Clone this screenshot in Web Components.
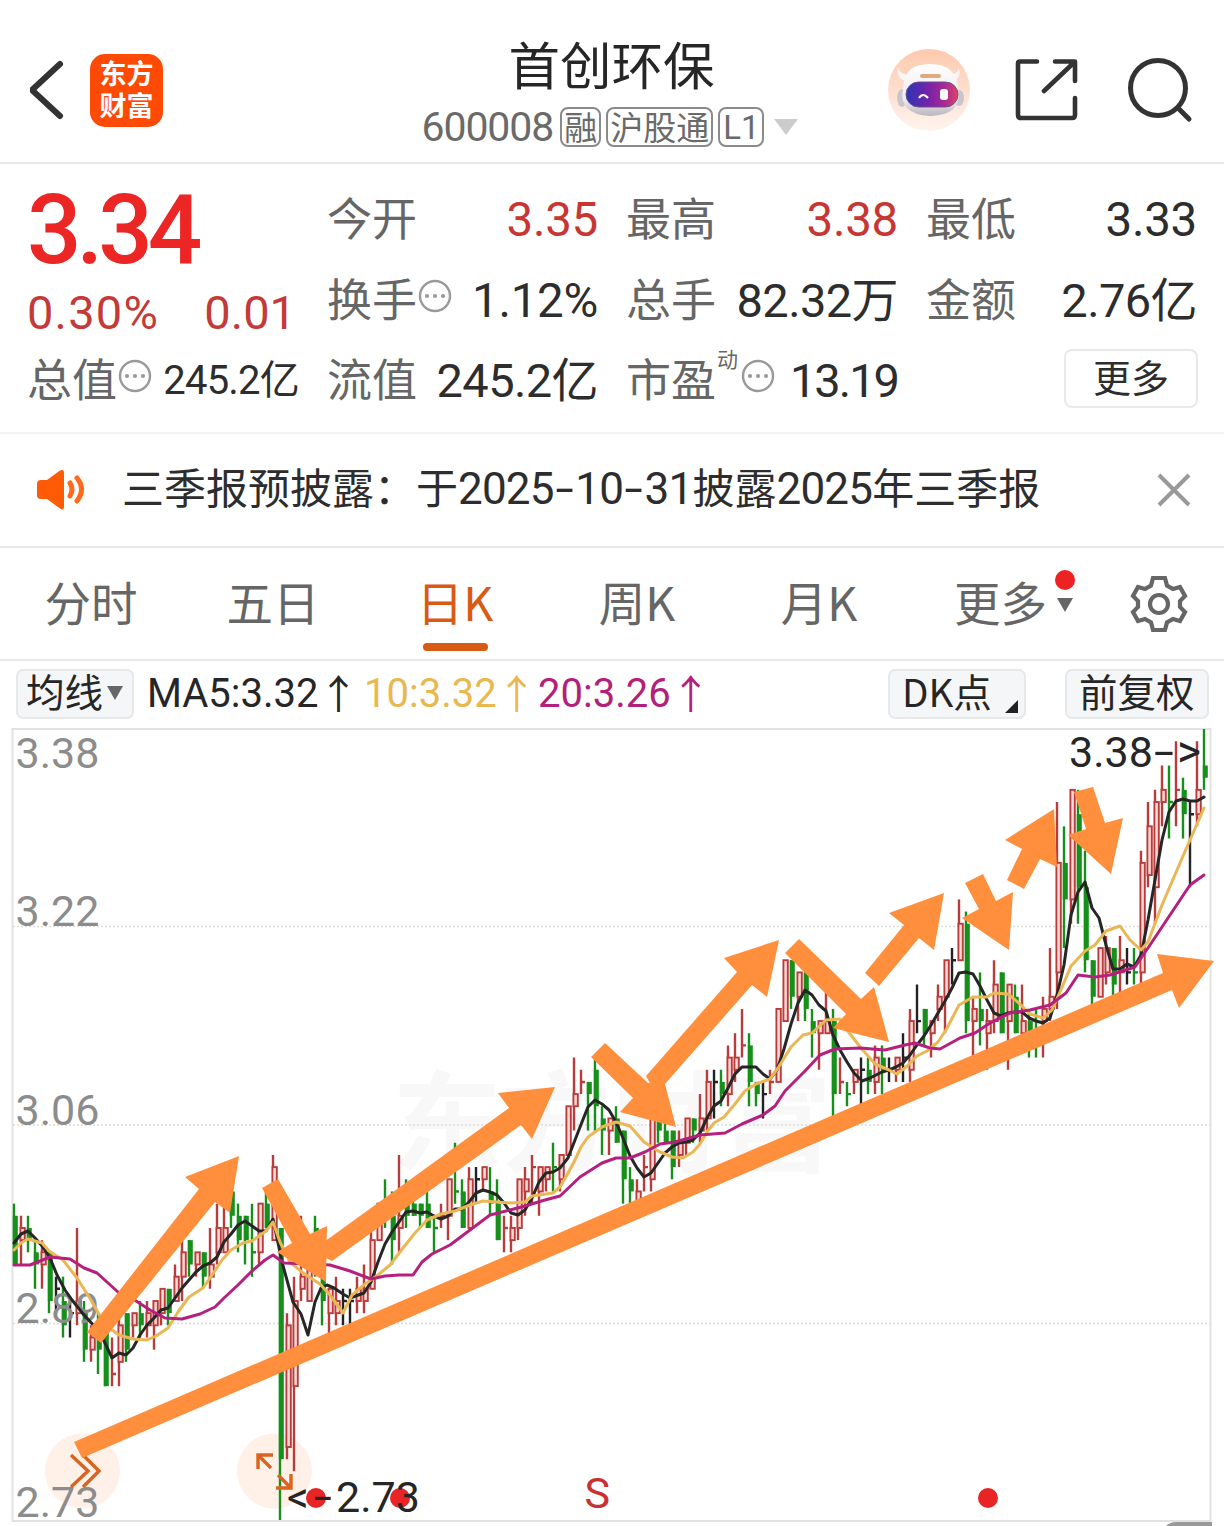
<!DOCTYPE html>
<html lang="zh-CN">
<head>
<meta charset="utf-8">
<title>首创环保 600008</title>
<style>
  body {
    margin: 0;
    width: 1224px;
    height: 1526px;
    overflow: hidden;
    background: #fff;
    color: #2d2d2d;
    font-family: "Noto Sans CJK SC", "Noto Sans", sans-serif;
    --num: Roboto, "Noto Sans CJK SC", sans-serif;
  }
</style>
</head>
<body>
<stock-page></stock-page>

<script>
class StockHeader extends HTMLElement {
  connectedCallback() {
    this.attachShadow({ mode: 'open' });
    this.shadowRoot.innerHTML = `
      <style>
        :host {
          display: grid;
          grid-template-columns: 395px 1fr 396px;
          height: 162px;
          border-bottom: 2px solid #e9e9e9;
        }
        .left, .right {
          display: flex;
          align-items: center;
          padding-top: 18px;
          height: 144px;
        }
        .left { padding-left: 25px; }
        .left svg { margin-right: 25px; }
        .right { justify-content: flex-end; padding-right: 30px; }
        .logo {
          display: grid;
          place-content: center;
          width: 73px;
          height: 73px;
          border-radius: 15px;
          background: #ff4a05;
          color: #fff;
          font-size: 27px;
          font-weight: 700;
          line-height: 32px;
          text-align: center;
          padding-bottom: 3px;
          box-sizing: border-box;
        }
        .middle {
          display: flex;
          flex-direction: column;
          align-items: center;
          padding-top: 32px;
        }
        .name { font-size: 51.5px; line-height: 62px; color: #262626; }
        .sub {
          display: flex;
          align-items: center;
          height: 66px;
          margin-left: -3px;
          color: #6a6a6a;
        }
        .code { font-family: var(--num); font-size: 41px; letter-spacing: -1.1px; margin-right: 7px; line-height: 60px; }
        .tag {
          border: 2px solid #8a8a8a;
          border-radius: 8px;
          font-size: 33px;
          line-height: 34px;
          height: 36px;
          padding: 0 2px;
          margin-right: 5px;
        }
        .tag.lv { font-family: var(--num); line-height: 37px; padding: 0 3px; }
        .arrow { margin-left: 5px; }
      </style>
      <div class="left">
        <svg width="40" height="62" viewBox="0 0 40 62" fill="none" stroke="#333" stroke-width="6" stroke-linecap="round" stroke-linejoin="bevel"><path d="M35 5 7 31 35 57"/></svg>
        <div class="logo">东方<br>财富</div>
      </div>
      <div class="middle">
        <div class="name">首创环保</div>
        <div class="sub">
          <span class="code">600008</span>
          <span class="tag">融</span><span class="tag">沪股通</span><span class="tag lv">L1</span>
          <svg class="arrow" width="24" height="17"><path d="M0 0H24L12 16Z" fill="#ccc"/></svg>
        </div>
      </div>
      <div class="right">
        <svg width="82" height="82" viewBox="0 0 82 82" style="margin-right:44px">
          <defs>
            <linearGradient id="bg" x2="0" y2="1"><stop offset="0" stop-color="#fdc9ad"/><stop offset="1" stop-color="#fff4ef"/></linearGradient>
            <linearGradient id="visor"><stop offset="0" stop-color="#2a35b5"/><stop offset=".45" stop-color="#7a22a8"/><stop offset=".75" stop-color="#a82a94"/><stop offset="1" stop-color="#e04460"/></linearGradient>
            <linearGradient id="shell" x2="0" y2="1"><stop offset="0" stop-color="#fff"/><stop offset=".7" stop-color="#eee9ee"/><stop offset="1" stop-color="#b9b4bd"/></linearGradient>
          </defs>
          <circle cx="41" cy="41" r="41" fill="url(#bg)"/>
          <path d="M10 19Q8 31 20 32L24 26Q13 27 10 19ZM71 19Q74 31 62 32L58 26Q69 27 71 19Z" fill="#faf5f5"/>
          <ellipse cx="14" cy="49" rx="5" ry="9" fill="#c9c5cb"/>
          <ellipse cx="71" cy="49" rx="5" ry="8" fill="#c9c5cb"/>
          <path d="M15 40Q15 15 42 15Q69 15 70 40Q75 66 42 67Q10 65 15 40Z" fill="url(#shell)"/>
          <rect x="32" y="25" width="21" height="4" rx="2" fill="#dfaa80"/>
          <rect x="18" y="33" width="52" height="25" rx="12.5" fill="url(#visor)" stroke="#6c5385"/>
          <path d="M31 49Q35 43 40 49" fill="none" stroke="#fff" stroke-width="2.2"/>
          <rect x="52" y="40" width="8" height="11" rx="3" fill="#fff"/>
        </svg>
        <svg width="66" height="66" viewBox="0 0 66 66" fill="none" stroke="#333" stroke-width="4.600" stroke-linecap="round" stroke-linejoin="round" style="margin-right:46px">
          <path d="M23 4.500H6Q4 4.500 4 6.500V58Q4 61 7 61H58Q61 61 61 58V41M41 4.500H61V24M60 5.500 30 34"/>
        </svg>
        <svg width="68" height="68" viewBox="0 0 68 68" fill="none" stroke="#333" stroke-width="5" stroke-linecap="round">
          <circle cx="32" cy="32" r="27.5"/><path d="M52 52 63 63"/>
        </svg>
      </div>
    `;
  }
}

/* label on the left, value on the right; "info" adds the dotted circle */
class QuoteItem extends HTMLElement {
  connectedCallback() {
    const info = this.hasAttribute('info')
      ? `<svg width="34" height="34" viewBox="0 0 34 34"><circle cx="17" cy="17" r="15" fill="none" stroke="#999" stroke-width="2.4"/><g fill="#999"><circle cx="9" cy="17" r="2.1"/><circle cx="17" cy="17" r="2.1"/><circle cx="25" cy="17" r="2.1"/></g></svg>`
      : '';
    const sup = this.getAttribute('sup');
    this.attachShadow({ mode: 'open' });
    this.shadowRoot.innerHTML = `
      <style>
        :host {
          display: flex;
          align-items: center;
          justify-content: space-between;
          white-space: nowrap;
        }
        .label {
          display: flex;
          align-items: center;
          font-size: 45px;
          line-height: 60px;
          color: #666;
          margin-top: -5px;
        }
        .label svg { margin: -4px 0 0 1px; }
        sup { align-self: flex-start; font-size: 21px; line-height: 22px; color: #666; margin: -1px 2px 0 1px; }
        .value {
          font-family: var(--num);
          font-size: var(--value-size, 47.5px);
          letter-spacing: var(--value-spacing, -0.3px);
          line-height: 60px;
          margin-top: 1px;
          color: var(--value-color, #2d2d2d);
        }
      </style>
      <div class="label"><slot name="label"></slot>${sup ? `<sup>${sup}</sup>` : ''}${info}</div>
      <div class="value"><slot></slot></div>
    `;
  }
}

class QuotePanel extends HTMLElement {
  connectedCallback() {
    this.attachShadow({ mode: 'open' });
    this.shadowRoot.innerHTML = `
      <style>
        :host {
          display: grid;
          grid-template-columns: 272px 271px 272px 271px;
          grid-template-rows: 82px 80px 80px;
          column-gap: 28px;
          box-sizing: border-box;
          height: 270px;
          padding: 14px 0 0 27px;
          border-bottom: 2px solid #f3f3f3;
        }
        .main { grid-row: 1 / 3; color: #ec2525; font-family: var(--num); }
        .price { font-size: 96px; font-weight: 500; line-height: 92px; letter-spacing: -5px; padding-top: 6px; }
        .change {
          display: flex;
          justify-content: space-between;
          font-size: 47px;
          line-height: 60px;
          letter-spacing: 1.2px;
          padding: 7px 3px 0 0;
          color: #c33a38;
        }
        .change span:last-child { letter-spacing: 0; }
        .up { --value-color: #c83634; }
        .unit { --value-size: 47px; --value-spacing: -0.6px; }
        .tight { --value-size: 47px; --value-spacing: -2px; }
        .small { --value-size: 40px; --value-spacing: -0.8px; }
        .more {
          justify-self: end;
          align-self: center;
          border: 2px solid #e9e9e9;
          border-radius: 8px;
          width: 130px;
          height: 55px;
          font-size: 38px;
          line-height: 50px;
          text-align: center;
          margin: -3px -1px 0 0;
        }
      </style>
      <div class="main">
        <div class="price">3.34</div>
        <div class="change"><span>0.30%</span><span>0.01</span></div>
      </div>
      <quote-item class="up"><span slot="label">今开</span>3.35</quote-item>
      <quote-item class="up"><span slot="label">最高</span>3.38</quote-item>
      <quote-item><span slot="label">最低</span>3.33</quote-item>
      <quote-item info><span slot="label">换手</span>1.12%</quote-item>
      <quote-item class="unit"><span slot="label">总手</span>82.32万</quote-item>
      <quote-item class="unit"><span slot="label">金额</span>2.76亿</quote-item>
      <quote-item info class="small"><span slot="label">总值</span>245.2亿</quote-item>
      <quote-item class="unit"><span slot="label">流值</span>245.2亿</quote-item>
      <quote-item info class="tight" sup="动"><span slot="label">市盈</span>13.19</quote-item>
      <div class="more">更多</div>
    `;
  }
}

class NoticeBar extends HTMLElement {
  connectedCallback() {
    const text = this.textContent
      .replace(/[\d-]+/g, run => `<span class="num">${run.replace(/-/g, '<i>-</i>')}</span>`);
    this.attachShadow({ mode: 'open' });
    this.shadowRoot.innerHTML = `
      <style>
        :host {
          display: flex;
          align-items: center;
          box-sizing: border-box;
          height: 114px;
          padding: 0 32px 0 36px;
          border-bottom: 2px solid #e9e9e9;
        }
        .text { flex: 1; margin: -8px 0 0 36px; font-size: 42px; line-height: 60px; white-space: nowrap; }
        .num { font-family: var(--num); font-size: 44px; letter-spacing: -0.8px; line-height: 1; }
        i { display: inline-block; width: 21.5px; font-style: normal; text-align: center; transform: scaleX(1.5); letter-spacing: 0; }
      </style>
      <svg width="50" height="42" viewBox="0 0 50 42">
        <path d="M5 11H11L24 1.500Q28 0 28 4V38Q28 42 24 39.500L11 30H5Q1 30 1 26V15Q1 11 5 11Z" fill="#ff5a05"/>
        <path d="M34 14Q38 20 34 27M41 9Q50 20 41 32" fill="none" stroke="#ff6a1c" stroke-width="5" stroke-linecap="round"/>
      </svg>
      <div class="text">${text}</div>
      <svg width="36" height="36" viewBox="0 0 36 36" stroke="#999" stroke-width="4"><path d="M3 3 33 33M33 3 3 33"/></svg>
    `;
  }
}

class PeriodTabs extends HTMLElement {
  connectedCallback() {
    this.attachShadow({ mode: 'open' });
    this.shadowRoot.innerHTML = `
      <style>
        :host {
          display: flex;
          align-items: center;
          box-sizing: border-box;
          height: 113px;
          border-bottom: 2px solid #e9e9e9;
          color: #666;
          font-size: 46.5px;
        }
        .tab {
          display: flex;
          flex-direction: column;
          align-items: center;
          width: 182px;
          height: 111px;
          line-height: 106px;
        }
        .tab:first-child { margin-left: -2px; }
        .tab.on { color: #d95a12; }
        .tab.on::after {
          content: "";
          width: 65px;
          height: 8px;
          border-radius: 4px;
          background: #d95a12;
          margin-top: -11px;
        }
        .more { display: flex; align-items: center; margin-left: 44px; width: 176px; height: 111px; line-height: 106px; }
        .more span:first-child { margin-top: -5px; }
        .mark { position: relative; margin: -4px 0 0 10px; line-height: 0; }
        .dot {
          position: absolute;
          left: -2px;
          top: -26px;
          width: 20px;
          height: 20px;
          border-radius: 50%;
          background: #ee2222;
          margin-top: 4px;
        }
      </style>
      <div class="tab">分时</div>
      <div class="tab">五日</div>
      <div class="tab on">日K</div>
      <div class="tab">周K</div>
      <div class="tab">月K</div>
      <div class="more"><span>更多</span><span class="mark"><svg width="16" height="14"><path d="M0 0H16L8 14Z" fill="#666"/></svg><i class="dot"></i></span></div>
      <svg width="58" height="58" viewBox="-29 -29 58 58" fill="none" stroke="#666" stroke-width="4.200" stroke-linejoin="miter">
        <path d="M-6-26H6L8-18.500 14-15 21-17 26-8 21-3V3L26 8 21 17 14 15 8 18.500 6 26H-6L-8 18.500-14 15-21 17-26 8-21 3V-3L-26-8-21-17-14-15-8-18.500Z"/>
        <circle r="9"/>
      </svg>
    `;
  }
}

class ChartToolbar extends HTMLElement {
  connectedCallback() {
    this.attachShadow({ mode: 'open' });
    this.shadowRoot.innerHTML = `
      <style>
        :host {
          display: flex;
          align-items: flex-start;
          box-sizing: border-box;
          height: 67px;
          padding: 8px 15px 0 16px;
          color: #262626;
        }
        .btn {
          display: flex;
          align-items: center;
          box-sizing: border-box;
          height: 50px;
          padding: 0 10px;
          border: 2px solid #e6e8ea;
          border-radius: 7px;
          background: #f5f6f8;
          font-size: 38.5px;
          line-height: 44px;
        }
        .btn span { margin-top: -9px; white-space: nowrap; }
        .ma { display: flex; font-family: var(--num); font-size: 40px; line-height: 50px; }
        .ma i { font-family: "Noto Sans CJK SC", sans-serif; font-style: normal; margin-top: -2px; }
        .m5 { margin-left: 13px; width: 217px; }
        .m10 { color: #e9b84f; width: 174px; }
        .m20 { color: #b3207c; flex: 1; }
      </style>
      <div class="btn" style="width:118px;padding-left:8px"><span>均线</span><svg width="16" height="14" style="margin:-2px 0 0 4px;flex:none"><path d="M0 0H16L8 14Z" fill="#666"/></svg></div>
      <div class="ma m5">MA5:3.32<i>↑</i></div>
      <div class="ma m10">10:3.32<i>↑</i></div>
      <div class="ma m20">20:3.26<i>↑</i></div>
      <div class="btn" style="width:138px;padding-left:12px;margin-right:39px"><span>DK点</span><svg width="13" height="13" style="margin:24px 0 0 13px;flex:none"><path d="M13 0V13H0Z" fill="#222"/></svg></div>
      <div class="btn" style="width:144px;padding-left:12px"><span>前复权</span></div>
    `;
  }
}

// colour, high, low, body top, body bottom; prices in 0.01 yuan
const CANDLES = `
g299,294,298,294 r298,294,297,296 g298,295,297,296 g296,292,295,294 r296,292,295,294
g295,290,295,291 k293,290,292,292 g293,288,291,289 k291,288,290,290 r297,289,291,290
g291,286,290,287 r289,286,288,287 g290,285,289,287 g289,284,289,284 r288,284,285,285
r290,284,289,286 g290,286,290,287 r290,288,290,289 g291,288,290,289 r291,288,290,289
r291,287,291,289 r292,289,292,290 g292,289,292,290 r294,291,293,291 r296,291,295,293
g296,293,296,294 r295,293,295,294 g295,292,295,293 r297,292,294,293 r299,294,297,295
r300,295,297,295 g300,297,300,298 g299,295,298,296 g298,294,298,296 g299,293,295,295
r299,294,299,295 g300,297,299,297 r303,296,302,296 g297,273,297,278 r290,278,289,279
r293,277,291,284 r298,291,293,292 r295,291,294,291 g298,293,297,294 g295,289,293,291
r292,288,292,290 r293,289,291,290 k292,289,291,291 k292,289,291,291 r293,290,292,291
r294,290,292,291 r297,292,296,292 r299,296,299,296 g301,297,299,298 g300,294,298,296
r303,295,298,297 g301,297,300,298 g300,298,299,298 g299,297,299,298 g300,297,299,297
g298,295,297,297 r299,297,298,298 r301,296,301,298 g304,299,300,300 g301,297,300,297
r302,297,301,297 k302,299,301,301 r302,300,302,301 g302,298,300,299 g301,296,299,296
r298,295,297,297 r298,295,297,296 r301,296,301,297 r302,298,301,300 r303,299,302,302
r302,298,302,300 r302,300,302,301 g304,300,302,302 r303,300,303,301 r307,303,307,303
r311,305,308,307 r310,308,309,309 g309,305,309,308 g311,305,310,307 g307,303,306,305
r306,303,306,305 g307,304,306,304 g305,299,305,301 g302,299,301,300 r301,299,300,299
r303,300,302,302 r306,300,306,301 g306,304,306,305 g306,304,305,304 g305,301,305,302
r305,302,304,303 r306,303,306,304 g306,304,306,305 r308,304,306,305 r310,305,309,306
k310,306,309,309 g310,307,309,308 r312,307,311,308 r313,309,311,310 r315,311,312,312
g313,307,312,309 g309,307,309,308 k309,306,308,308 r310,308,309,309 r315,309,315,309
r319,314,319,314 g319,315,319,316 r318,314,318,316 g318,314,318,315 g315,311,314,313
r314,310,314,313 r317,313,314,313 g315,306,314,308 r311,308,309,309 g309,307,308,308
r310,308,310,309 k311,307,310,310 g311,308,310,309 r312,308,311,309 g312,308,311,310
k311,309,310,310 r311,309,311,310 k313,309,311,311 r315,309,314,310 k317,313,314,314
g315,312,315,313 r314,311,314,313 r317,314,316,315 r319,313,319,316 k320,317,319,319
r324,319,322,319 g323,313,322,314 r316,311,315,314 g318,312,315,314 r315,310,314,313
r319,313,317,314 g318,313,318,313 r317,310,317,314 g317,313,316,313 r317,313,314,313
g315,311,314,313 g315,311,313,312 r316,311,315,314 r320,314,316,315 r332,315,327,318
g330,320,327,324 r333,322,333,324 g333,322,331,325 g328,318,325,319 g319,315,319,316
r320,316,320,316 r321,317,320,318 g320,316,320,317 r321,316,319,318 k320,317,318,318
g320,317,318,318 r328,317,327,318 r332,325,330,326 r333,322,332,325 r335,330,333,332
g335,329,332,332 r337,330,333,333 g334,329,333,331 k332,325,331,331 r337,330,333,331
g338,333,335,334`.trim().split(/\s+/);

const COLORS = { r: '#b93c3c', g: '#178f1b', k: '#222' };

const MA5 = '14,1243 21,1234 28,1231 35,1238 43,1247 50,1258 57,1275 65,1290 72,1300 84,1315 98,1330 105,1343 112,1358 119,1353 126,1355 133,1348 140,1335 147,1325 154,1318 161,1310 168,1308 175,1298 182,1288 189,1280 196,1272 203,1266 210,1263 217,1257 224,1242 231,1234 238,1225 245,1221 252,1226 259,1231 266,1231 273,1219 277,1238 282,1262 293,1302 301,1314 308,1335 315,1302 321,1288 327,1285 334,1288 343,1294 350,1298 364,1293 371,1282 378,1262 385,1244 392,1232 399,1222 406,1212 413,1211 420,1213 427,1212 434,1216 441,1219 448,1216 455,1209 462,1209 469,1202 476,1193 483,1190 490,1192 497,1195 504,1203 511,1213 518,1215 525,1210 532,1198 539,1182 546,1173 553,1172 560,1168 568,1158 575,1140 582,1122 588,1107 595,1100 602,1104 609,1110 616,1122 623,1138 630,1156 637,1168 644,1177 651,1173 658,1163 665,1153 672,1147 679,1143 686,1142 693,1140 700,1133 707,1118 714,1106 721,1101 728,1088 735,1074 742,1067 756,1067 763,1074 770,1079 777,1070 784,1049 791,1024 798,1003 805,990 812,995 819,1005 826,1011 833,1035 840,1050 847,1062 854,1073 862,1081 870,1078 882,1072 889,1070 896,1067 903,1063 910,1055 917,1045 924,1036 931,1025 938,1013 945,1001 952,988 959,973 966,972 973,974 980,986 987,1000 994,1013 1001,1016 1008,1013 1015,1012 1022,1012 1029,1018 1036,1021 1043,1023 1050,1018 1057,995 1064,965 1071,915 1078,892 1085,882 1092,908 1099,918 1106,945 1113,969 1120,969 1127,964 1134,967 1141,955 1148,920 1155,880 1162,840 1169,812 1176,801 1183,799 1190,801 1197,801 1204,797';
const MA10 = '14,1250 21,1243 28,1239 42,1243 49,1251 63,1260 77,1278 91,1300 105,1325 119,1335 133,1339 147,1340 156,1336 168,1328 178,1312 189,1297 203,1288 210,1278 222,1260 231,1250 243,1243 252,1241 266,1231 273,1222 280,1242 290,1262 303,1273 320,1284 330,1295 343,1313 352,1295 365,1284 378,1275 390,1265 403,1248 415,1233 427,1220 441,1214 455,1211 470,1205 483,1201 497,1202 511,1203 525,1202 532,1196 553,1193 560,1187 567,1175 574,1162 581,1147 588,1137 602,1127 616,1122 630,1126 637,1134 644,1142 658,1151 672,1157 683,1158 693,1152 700,1144 707,1132 714,1123 724,1117 735,1104 745,1091 756,1084 770,1079 778,1068 791,1047 803,1035 812,1033 826,1020 840,1019 847,1030 861,1048 875,1064 889,1070 897,1074 906,1067 917,1056 927,1051 938,1042 946,1030 959,1005 973,997 987,997 994,993 1008,994 1020,1004 1030,1014 1043,1018 1052,1010 1060,992 1071,966 1085,951 1095,945 1106,931 1120,926 1130,940 1141,950 1148,942 1162,905 1183,856 1204,808';
const MA20 = '14,1265 30,1265 50,1257 70,1259 84,1268 97,1273 118,1292 133,1299 150,1310 165,1318 182,1319 200,1314 215,1307 224,1298 238,1285 252,1271 265,1260 273,1255 284,1263 310,1264 330,1265 350,1271 371,1279 385,1276 399,1275 413,1275 422,1262 432,1254 450,1245 470,1230 490,1215 510,1210 525,1206 545,1200 560,1196 580,1177 602,1163 616,1158 630,1158 645,1152 660,1144 675,1142 700,1135 725,1133 742,1124 763,1115 775,1106 785,1091 805,1071 820,1055 835,1049 860,1048 885,1050 905,1045 915,1043 930,1048 940,1049 960,1038 975,1033 990,1023 1010,1013 1030,1010 1050,1005 1066,993 1078,975 1095,977 1110,975 1135,967 1150,945 1170,915 1190,885 1204,875';

const ARROWS = [
  '74,1442 1163,973 1157,954 1214,961 1179,1008 1172,990 82,1458',
  '87,1332 199,1189 185,1177 239,1156 230,1213 215,1202 101,1343',
  '262,1188 278,1179 310,1234 327,1226 326,1282 277,1252 292,1243',
  '324,1242 509,1108 498,1093 555,1087 532,1139 521,1125 332,1261 322,1256',
  '591,1057 605,1043 648,1083 665,1084 676,1127 620,1112 633,1098',
  '646,1076 737,972 724,958 779,940 767,997 752,985 665,1084 655,1092',
  '785,953 799,939 861,999 874,987 889,1042 833,1028 846,1014',
  '865,973 904,925 889,913 944,893 934,950 919,938 879,986',
  '965,883 983,874 996,901 1013,892 1009,950 962,918 979,909',
  '1007,880 1022,849 1005,840 1054,809 1057,867 1040,859 1024,889',
  '1074,792 1093,787 1105,823 1123,818 1111,874 1068,835 1086,829'
];

class KlineChart extends HTMLElement {
  connectedCallback() {
    this.attachShadow({ mode: 'open' });
    this.shadowRoot.innerHTML = `
      <style>
        :host { display: block; height: 798px; }
        svg { display: block; overflow: visible; }
        text { font-family: var(--num); }
        .axis { font-size: 43px; fill: #8c8c8c; }
        .mark { font-size: 43px; fill: #262626; }
        .ma { fill: none; stroke-width: 3; stroke-linejoin: round; stroke-linecap: round; }
      </style>
      <svg width="1224" height="798" viewBox="0 728 1224 798">
        <text x="392" y="1164" font-size="110" font-weight="700" fill="#f8f8f8">东方财富</text>
        <path d="M12.500 1521V729H1210.500V1521Z" fill="none" stroke="#e2e2e2" stroke-width="2"/>
        <path d="M13 926.500H1210M13 1125H1210M13 1323.500H1210" stroke="#dcdcdc" stroke-width="1.500" stroke-dasharray="2 2"/>
        <circle cx="82.500" cy="1471" r="37.500" fill="#fff0e8"/>
        <circle cx="274.500" cy="1471" r="37.500" fill="#fff0e8"/>
        ${this.candles()}
        <g class="axis">
          <text x="15.500" y="768">3.38</text>
          <text x="15.500" y="925.500">3.22</text>
          <text x="15.500" y="1125">3.06</text>
          <text x="15.500" y="1323">2.89</text>
          <text x="15.500" y="1516.500">2.73</text>
        </g>
        <polyline class="ma" points="${MA5}" stroke="#262626"/>
        <path d="M1190 801V885" stroke="#262626" stroke-width="2"/>
        <polyline class="ma" points="${MA10}" stroke="#eab755"/>
        <polyline class="ma" points="${MA20}" stroke="#b5207f"/>
        <g fill="none" stroke="#d8641f" stroke-width="3.400">
          <path d="M71 1455 88 1471 71 1487M83 1455 99 1471 83 1487"/>
          <path d="M273 1455H258V1469M259 1456 271 1468M291 1474V1488H276M290 1487 278 1475"/>
        </g>
        <g fill="#e82424">
          <circle cx="316" cy="1498" r="10"/><circle cx="400" cy="1498" r="10"/><circle cx="988" cy="1498" r="10"/>
        </g>
        <text class="mark" x="287" y="1512">&lt;<tspan x="314" dy="-1" font-size="43" textLength="18" lengthAdjust="spacingAndGlyphs">-</tspan><tspan x="336" dy="1">2.73</tspan></text>
        <text x="584.500" y="1507.500" font-size="43" fill="#c93030">S</text>
        <text class="mark" x="1069" y="767">3.38<tspan x="1154" dy="-1" textLength="20" lengthAdjust="spacingAndGlyphs">-</tspan><tspan x="1177" dy="1" font-size="46">&gt;</tspan></text>
        <g fill="#ff8f3c">${ARROWS.map(p => `<polygon points="${p}"/>`).join('')}</g>
        <path d="M1166 1526Q1170 1522 1176 1522H1212V1526Z" fill="#999"/>
      </svg>
    `;
  }

  y(price) {
    return 729 + (338 - price) * 12.17;
  }

  candles() {
    return CANDLES.map((item, i) => {
      const kind = item[0];
      const [high, low, top, bottom] = item.slice(1).split(',').map(v => this.y(+v));
      const x = 14 + i * 7;
      const color = COLORS[kind];
      if (top === bottom) {
        return `<path d="M${x} ${high}V${low}M${x} ${top}H${x + 4}" stroke="${color}" stroke-width="2.4" fill="none"/>`;
      }
      if (kind === 'r') {
        return `<path d="M${x} ${high}V${top}M${x} ${bottom}V${low}" stroke="${color}" stroke-width="2.4"/>` +
          `<rect x="${x - 0.6}" y="${top}" width="4.4" height="${bottom - top}" fill="#ffd9d5" stroke="${color}" stroke-width="1.9"/>`;
      }
      return `<path d="M${x} ${high}V${low}" stroke="${color}" stroke-width="2.4"/>` +
        `<rect x="${x - 1.2}" y="${top}" width="5" height="${bottom - top}" fill="${color}"/>`;
    }).join('');
  }
}

class StockPage extends HTMLElement {
  connectedCallback() {
    this.attachShadow({ mode: 'open' });
    this.shadowRoot.innerHTML = `
      <style>
        :host { display: flex; flex-direction: column; width: 1224px; height: 1526px; }
        :host > * { flex: none; }
      </style>
      <stock-header></stock-header>
      <quote-panel></quote-panel>
      <notice-bar>三季报预披露：于2025-10-31披露2025年三季报</notice-bar>
      <period-tabs></period-tabs>
      <chart-toolbar></chart-toolbar>
      <kline-chart></kline-chart>
    `;
  }
}

customElements.define('stock-header', StockHeader);
customElements.define('quote-item', QuoteItem);
customElements.define('quote-panel', QuotePanel);
customElements.define('notice-bar', NoticeBar);
customElements.define('period-tabs', PeriodTabs);
customElements.define('chart-toolbar', ChartToolbar);
customElements.define('kline-chart', KlineChart);
customElements.define('stock-page', StockPage);
</script>
</body>
</html>
